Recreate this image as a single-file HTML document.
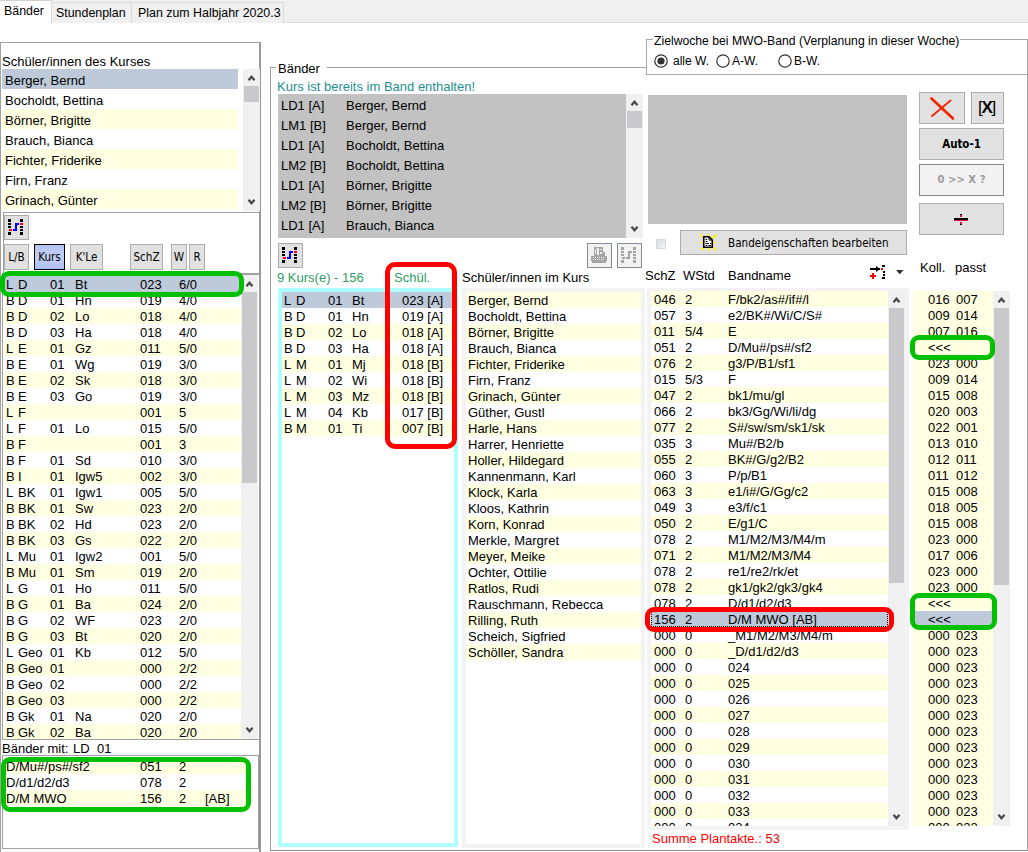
<!DOCTYPE html>
<html lang="de"><head><meta charset="utf-8"><title>Bänder</title>
<style>
*{box-sizing:border-box;margin:0;padding:0}
html,body{width:1028px;height:852px;overflow:hidden;background:#fff}
body{position:relative;font-family:"Liberation Sans",Arial,sans-serif;font-size:13px;color:#000;line-height:16px}
.a{position:absolute}
.t{position:absolute;white-space:pre;height:16px;line-height:16px}
.r{position:absolute;left:0;right:0;height:16px;line-height:17px;white-space:pre;overflow:hidden}
.r20{position:absolute;left:0;right:0;height:20px;line-height:23px}
.y{background:#FFFFE1}.s{background:#BECADA}
.c{position:absolute;top:0;white-space:pre}
.btn{position:absolute;background:#E1E1E1;border:1px solid #ADADAD;font-family:"Liberation Sans",sans-serif;font-size:11.6px;text-align:center}
.sb{position:absolute;background:#F0F0F0;width:17px}
.th{position:absolute;left:1px;width:15px;background:#C9C9CC}
.g{color:#2E9E62}
</style></head><body>

<div class="a" style="left:0;top:0;width:1028px;height:23px;background:#F0F0F0;border-bottom:1px solid #DCDCDC"></div>
<div class="a" style="left:51px;top:2px;width:81px;height:21px;background:#F0F0F0;border:1px solid #D9D9D9;border-bottom:none"></div>
<div class="a" style="left:131px;top:2px;width:153px;height:21px;background:#F0F0F0;border:1px solid #D9D9D9;border-bottom:none"></div>
<div class="a" style="left:0;top:0;width:52px;height:24px;background:#fff;border-top:1px solid #D0D0D0;border-right:1px solid #D9D9D9"></div>
<div class="t" style="left:4px;top:3px;font-size:12.4px">Bänder</div>
<div class="t" style="left:56px;top:5px;font-size:12.4px">Stundenplan</div>
<div class="t" style="left:138px;top:5px;font-size:12.4px">Plan zum Halbjahr 2020.3</div>
<div class="a" style="left:0;top:42px;width:261px;height:812px;border:1px solid #A0A0A0;border-right:2px solid #999;border-bottom:none"></div>
<div class="t" style="left:2px;top:54px">Schüler/innen des Kurses</div>
<div class="a" style="left:2px;top:69px;width:236px;height:141px;overflow:hidden">
<div class="r20 s" style="top:0px;padding-left:3px">Berger, Bernd</div>
<div class="r20 " style="top:20px;padding-left:3px">Bocholdt, Bettina</div>
<div class="r20 y" style="top:40px;padding-left:3px">Börner, Brigitte</div>
<div class="r20 " style="top:60px;padding-left:3px">Brauch, Bianca</div>
<div class="r20 y" style="top:80px;padding-left:3px">Fichter, Friderike</div>
<div class="r20 " style="top:100px;padding-left:3px">Firn, Franz</div>
<div class="r20 y" style="top:120px;padding-left:3px">Grinach, Günter</div>
</div>
<div class="sb" style="left:243px;top:69px;height:142px"><div class="th" style="top:17px;height:16px"></div><svg class="a" style="left:0;top:0" width="17" height="17"><path d="M5.5 11.3 L8.5 7.7 L11.5 11.3" fill="none" stroke="#484848" stroke-width="2.2"/></svg><svg class="a" style="left:0;bottom:0" width="17" height="17"><path d="M5.5 5.7 L8.5 9.3 L11.5 5.7" fill="none" stroke="#484848" stroke-width="2.2"/></svg></div>
<div class="a" style="left:3px;top:212px;width:256px;height:61px;border-top:1px solid #A0A0A0;border-left:1px solid #A0A0A0"></div>
<div class="btn" style="left:4px;top:215px;width:25px;height:25px"></div>
<svg class="a" style="left:8px;top:219px" width="15" height="16" viewBox="0 0 15 16" shape-rendering="crispEdges">
<g fill="#000"><rect x="0" y="0" width="3" height="3"/><rect x="0" y="4" width="3" height="2"/><rect x="0" y="7" width="3" height="2"/><rect x="0" y="13" width="3" height="3"/>
<rect x="12" y="0" width="3" height="3"/><rect x="12" y="7" width="3" height="2"/><rect x="12" y="10" width="3" height="2"/><rect x="12" y="13" width="3" height="3"/></g>
<g fill="#F00"><rect x="1" y="10" width="3" height="2"/><rect x="12" y="4" width="3" height="2"/></g>
<g fill="#00F"><rect x="7" y="4" width="4" height="2"/><rect x="7" y="4" width="2" height="8"/><rect x="5" y="10" width="4" height="2"/></g></svg>
<div class="btn" style="left:4px;top:244px;width:25px;height:26px;line-height:24px;font-family:&quot;DejaVu Sans Condensed&quot;,&quot;DejaVu Sans&quot;,sans-serif;font-size:11.6px;">L/B</div>
<div class="btn" style="left:34px;top:244px;width:31px;height:26px;line-height:24px;font-family:&quot;DejaVu Sans Condensed&quot;,&quot;DejaVu Sans&quot;,sans-serif;font-size:11.6px;background:linear-gradient(#B4C2F2,#C6D0F6 50%,#AEBCF0);border-color:#000;">Kurs</div>
<div class="btn" style="left:70px;top:244px;width:33px;height:26px;line-height:24px;font-family:&quot;DejaVu Sans Condensed&quot;,&quot;DejaVu Sans&quot;,sans-serif;font-size:11.6px;">K'Le</div>
<div class="btn" style="left:130px;top:244px;width:33px;height:26px;line-height:24px;font-family:&quot;DejaVu Sans Condensed&quot;,&quot;DejaVu Sans&quot;,sans-serif;font-size:11.6px;">SchZ</div>
<div class="btn" style="left:171px;top:244px;width:16px;height:26px;line-height:24px;font-family:&quot;DejaVu Sans Condensed&quot;,&quot;DejaVu Sans&quot;,sans-serif;font-size:11.6px;">W</div>
<div class="btn" style="left:189px;top:244px;width:16px;height:26px;line-height:24px;font-family:&quot;DejaVu Sans Condensed&quot;,&quot;DejaVu Sans&quot;,sans-serif;font-size:11.6px;">R</div>
<div class="a" style="left:2px;top:273px;width:258px;height:467px;border:1px solid #A0A0A0;border-top:2px solid #A0A0A0"></div>
<div class="a" style="left:4px;top:276px;width:237px;height:463px;overflow:hidden">
<div class="r s" style="top:0px"><span class="c" style="left:2px">L</span><span class="c" style="left:14px">D</span><span class="c" style="left:46px">01</span><span class="c" style="left:71px">Bt</span><span class="c" style="left:136px">023</span><span class="c" style="left:175px">6/0</span></div>
<div class="r " style="top:16px"><span class="c" style="left:2px">B</span><span class="c" style="left:14px">D</span><span class="c" style="left:46px">01</span><span class="c" style="left:71px">Hn</span><span class="c" style="left:136px">019</span><span class="c" style="left:175px">4/0</span></div>
<div class="r y" style="top:32px"><span class="c" style="left:2px">B</span><span class="c" style="left:14px">D</span><span class="c" style="left:46px">02</span><span class="c" style="left:71px">Lo</span><span class="c" style="left:136px">018</span><span class="c" style="left:175px">4/0</span></div>
<div class="r " style="top:48px"><span class="c" style="left:2px">B</span><span class="c" style="left:14px">D</span><span class="c" style="left:46px">03</span><span class="c" style="left:71px">Ha</span><span class="c" style="left:136px">018</span><span class="c" style="left:175px">4/0</span></div>
<div class="r y" style="top:64px"><span class="c" style="left:2px">L</span><span class="c" style="left:14px">E</span><span class="c" style="left:46px">01</span><span class="c" style="left:71px">Gz</span><span class="c" style="left:136px">011</span><span class="c" style="left:175px">5/0</span></div>
<div class="r " style="top:80px"><span class="c" style="left:2px">B</span><span class="c" style="left:14px">E</span><span class="c" style="left:46px">01</span><span class="c" style="left:71px">Wg</span><span class="c" style="left:136px">019</span><span class="c" style="left:175px">3/0</span></div>
<div class="r y" style="top:96px"><span class="c" style="left:2px">B</span><span class="c" style="left:14px">E</span><span class="c" style="left:46px">02</span><span class="c" style="left:71px">Sk</span><span class="c" style="left:136px">018</span><span class="c" style="left:175px">3/0</span></div>
<div class="r " style="top:112px"><span class="c" style="left:2px">B</span><span class="c" style="left:14px">E</span><span class="c" style="left:46px">03</span><span class="c" style="left:71px">Go</span><span class="c" style="left:136px">019</span><span class="c" style="left:175px">3/0</span></div>
<div class="r y" style="top:128px"><span class="c" style="left:2px">L</span><span class="c" style="left:14px">F</span><span class="c" style="left:46px"></span><span class="c" style="left:71px"></span><span class="c" style="left:136px">001</span><span class="c" style="left:175px">5</span></div>
<div class="r " style="top:144px"><span class="c" style="left:2px">L</span><span class="c" style="left:14px">F</span><span class="c" style="left:46px">01</span><span class="c" style="left:71px">Lo</span><span class="c" style="left:136px">015</span><span class="c" style="left:175px">5/0</span></div>
<div class="r y" style="top:160px"><span class="c" style="left:2px">B</span><span class="c" style="left:14px">F</span><span class="c" style="left:46px"></span><span class="c" style="left:71px"></span><span class="c" style="left:136px">001</span><span class="c" style="left:175px">3</span></div>
<div class="r " style="top:176px"><span class="c" style="left:2px">B</span><span class="c" style="left:14px">F</span><span class="c" style="left:46px">01</span><span class="c" style="left:71px">Sd</span><span class="c" style="left:136px">010</span><span class="c" style="left:175px">3/0</span></div>
<div class="r y" style="top:192px"><span class="c" style="left:2px">B</span><span class="c" style="left:14px">I</span><span class="c" style="left:46px">01</span><span class="c" style="left:71px">Igw5</span><span class="c" style="left:136px">002</span><span class="c" style="left:175px">3/0</span></div>
<div class="r " style="top:208px"><span class="c" style="left:2px">L</span><span class="c" style="left:14px">BK</span><span class="c" style="left:46px">01</span><span class="c" style="left:71px">Igw1</span><span class="c" style="left:136px">005</span><span class="c" style="left:175px">5/0</span></div>
<div class="r y" style="top:224px"><span class="c" style="left:2px">B</span><span class="c" style="left:14px">BK</span><span class="c" style="left:46px">01</span><span class="c" style="left:71px">Sw</span><span class="c" style="left:136px">023</span><span class="c" style="left:175px">2/0</span></div>
<div class="r " style="top:240px"><span class="c" style="left:2px">B</span><span class="c" style="left:14px">BK</span><span class="c" style="left:46px">02</span><span class="c" style="left:71px">Hd</span><span class="c" style="left:136px">023</span><span class="c" style="left:175px">2/0</span></div>
<div class="r y" style="top:256px"><span class="c" style="left:2px">B</span><span class="c" style="left:14px">BK</span><span class="c" style="left:46px">03</span><span class="c" style="left:71px">Gs</span><span class="c" style="left:136px">022</span><span class="c" style="left:175px">2/0</span></div>
<div class="r " style="top:272px"><span class="c" style="left:2px">L</span><span class="c" style="left:14px">Mu</span><span class="c" style="left:46px">01</span><span class="c" style="left:71px">Igw2</span><span class="c" style="left:136px">001</span><span class="c" style="left:175px">5/0</span></div>
<div class="r y" style="top:288px"><span class="c" style="left:2px">B</span><span class="c" style="left:14px">Mu</span><span class="c" style="left:46px">01</span><span class="c" style="left:71px">Sm</span><span class="c" style="left:136px">019</span><span class="c" style="left:175px">2/0</span></div>
<div class="r " style="top:304px"><span class="c" style="left:2px">L</span><span class="c" style="left:14px">G</span><span class="c" style="left:46px">01</span><span class="c" style="left:71px">Ho</span><span class="c" style="left:136px">011</span><span class="c" style="left:175px">5/0</span></div>
<div class="r y" style="top:320px"><span class="c" style="left:2px">B</span><span class="c" style="left:14px">G</span><span class="c" style="left:46px">01</span><span class="c" style="left:71px">Ba</span><span class="c" style="left:136px">024</span><span class="c" style="left:175px">2/0</span></div>
<div class="r " style="top:336px"><span class="c" style="left:2px">B</span><span class="c" style="left:14px">G</span><span class="c" style="left:46px">02</span><span class="c" style="left:71px">WF</span><span class="c" style="left:136px">023</span><span class="c" style="left:175px">2/0</span></div>
<div class="r y" style="top:352px"><span class="c" style="left:2px">B</span><span class="c" style="left:14px">G</span><span class="c" style="left:46px">03</span><span class="c" style="left:71px">Bt</span><span class="c" style="left:136px">020</span><span class="c" style="left:175px">2/0</span></div>
<div class="r " style="top:368px"><span class="c" style="left:2px">L</span><span class="c" style="left:14px">Geo</span><span class="c" style="left:46px">01</span><span class="c" style="left:71px">Kb</span><span class="c" style="left:136px">012</span><span class="c" style="left:175px">5/0</span></div>
<div class="r y" style="top:384px"><span class="c" style="left:2px">B</span><span class="c" style="left:14px">Geo</span><span class="c" style="left:46px">01</span><span class="c" style="left:71px"></span><span class="c" style="left:136px">000</span><span class="c" style="left:175px">2/2</span></div>
<div class="r " style="top:400px"><span class="c" style="left:2px">B</span><span class="c" style="left:14px">Geo</span><span class="c" style="left:46px">02</span><span class="c" style="left:71px"></span><span class="c" style="left:136px">000</span><span class="c" style="left:175px">2/2</span></div>
<div class="r y" style="top:416px"><span class="c" style="left:2px">B</span><span class="c" style="left:14px">Geo</span><span class="c" style="left:46px">03</span><span class="c" style="left:71px"></span><span class="c" style="left:136px">000</span><span class="c" style="left:175px">2/2</span></div>
<div class="r " style="top:432px"><span class="c" style="left:2px">B</span><span class="c" style="left:14px">Gk</span><span class="c" style="left:46px">01</span><span class="c" style="left:71px">Na</span><span class="c" style="left:136px">020</span><span class="c" style="left:175px">2/0</span></div>
<div class="r y" style="top:448px"><span class="c" style="left:2px">B</span><span class="c" style="left:14px">Gk</span><span class="c" style="left:46px">02</span><span class="c" style="left:71px">Ba</span><span class="c" style="left:136px">020</span><span class="c" style="left:175px">2/0</span></div>
</div>
<div class="sb" style="left:241px;top:275px;height:464px"><div class="th" style="top:17px;height:191px"></div><svg class="a" style="left:0;top:0" width="17" height="17"><path d="M5.5 11.3 L8.5 7.7 L11.5 11.3" fill="none" stroke="#484848" stroke-width="2.2"/></svg><svg class="a" style="left:0;bottom:0" width="17" height="17"><path d="M5.5 5.7 L8.5 9.3 L11.5 5.7" fill="none" stroke="#484848" stroke-width="2.2"/></svg></div>
<div class="a" style="left:0;top:271px;width:244px;height:26px;border:5px solid #00C000;border-radius:9px"></div>
<div class="t" style="left:2px;top:741px">Bänder mit:</div><div class="t" style="left:73px;top:741px">LD</div><div class="t" style="left:97px;top:741px">01</div>
<div class="a" style="left:2px;top:755px;width:257px;height:94px;border:1px solid #A0A0A0"></div>
<div class="a" style="left:4px;top:758px;width:243px;height:48px;overflow:hidden">
<div class="r y" style="top:0px"><span class="c" style="left:2px">D/Mu#/ps#/sf2</span><span class="c" style="left:136px">051</span><span class="c" style="left:175px">2</span><span class="c" style="left:201px"></span></div>
<div class="r " style="top:16px"><span class="c" style="left:2px">D/d1/d2/d3</span><span class="c" style="left:136px">078</span><span class="c" style="left:175px">2</span><span class="c" style="left:201px"></span></div>
<div class="r y" style="top:32px"><span class="c" style="left:2px">D/M MWO</span><span class="c" style="left:136px">156</span><span class="c" style="left:175px">2</span><span class="c" style="left:201px">[AB]</span></div>
</div>
<div class="a" style="left:1px;top:757px;width:250px;height:55px;border:5px solid #00C000;border-radius:9px"></div>
<div class="a" style="left:270px;top:67px;width:758px;height:784px;border:1px solid #A0A0A0;border-bottom-color:#8C8C8C"></div>
<div class="t" style="left:276px;top:61px;width:51px;background:#fff;padding:0 2px;font-size:13px">Bänder</div>
<div class="t" style="left:277px;top:79px;color:#1E9090">Kurs ist bereits im Band enthalten!</div>
<div class="a" style="left:278px;top:94px;width:348px;height:144px;background:#C2C2C2;overflow:hidden">
<div class="r20" style="top:0px"><span class="c" style="left:3px">LD1 [A]</span><span class="c" style="left:68px">Berger, Bernd</span></div>
<div class="r20" style="top:20px"><span class="c" style="left:3px">LM1 [B]</span><span class="c" style="left:68px">Berger, Bernd</span></div>
<div class="r20" style="top:40px"><span class="c" style="left:3px">LD1 [A]</span><span class="c" style="left:68px">Bocholdt, Bettina</span></div>
<div class="r20" style="top:60px"><span class="c" style="left:3px">LM2 [B]</span><span class="c" style="left:68px">Bocholdt, Bettina</span></div>
<div class="r20" style="top:80px"><span class="c" style="left:3px">LD1 [A]</span><span class="c" style="left:68px">Börner, Brigitte</span></div>
<div class="r20" style="top:100px"><span class="c" style="left:3px">LM2 [B]</span><span class="c" style="left:68px">Börner, Brigitte</span></div>
<div class="r20" style="top:120px"><span class="c" style="left:3px">LD1 [A]</span><span class="c" style="left:68px">Brauch, Bianca</span></div>
</div>
<div class="sb" style="left:626px;top:94px;height:144px"><div class="th" style="top:17px;height:17px"></div><svg class="a" style="left:0;top:0" width="17" height="17"><path d="M5.5 11.3 L8.5 7.7 L11.5 11.3" fill="none" stroke="#484848" stroke-width="2.2"/></svg><svg class="a" style="left:0;bottom:0" width="17" height="17"><path d="M5.5 5.7 L8.5 9.3 L11.5 5.7" fill="none" stroke="#484848" stroke-width="2.2"/></svg></div>
<div class="a" style="left:648px;top:95px;width:259px;height:129px;background:#C2C2C2"></div>
<div class="a" style="left:646px;top:39px;width:382px;height:36px;background:#fff;border:1px solid #A8A8A8"></div>
<div class="t" style="left:653px;top:33px;background:#fff;padding:0 1px;font-size:12.2px">Zielwoche bei MWO-Band (Verplanung in dieser Woche)</div>
<svg class="a" style="left:653.5px;top:53.5px" width="14" height="14"><circle cx="7" cy="7" r="6.2" fill="#fff" stroke="#333" stroke-width="1.2"/><circle cx="7" cy="7" r="3.6" fill="#333"/></svg>
<svg class="a" style="left:715.5px;top:53.5px" width="14" height="14"><circle cx="7" cy="7" r="6.2" fill="#fff" stroke="#333" stroke-width="1.2"/></svg>
<svg class="a" style="left:777.5px;top:53.5px" width="14" height="14"><circle cx="7" cy="7" r="6.2" fill="#fff" stroke="#333" stroke-width="1.2"/></svg>
<div class="t" style="left:673px;top:53px;font-size:12px">alle W.</div>
<div class="t" style="left:732px;top:53px;font-size:12px">A-W.</div>
<div class="t" style="left:794px;top:53px;font-size:12px">B-W.</div>
<div class="btn" style="left:919px;top:92px;width:46px;height:32px"></div>
<svg class="a" style="left:930px;top:96px" width="24" height="24"><path d="M1.5 2.5 L23 22.5" stroke="#F02808" stroke-width="2.8" stroke-linecap="round" fill="none"/><path d="M20.5 4.5 L2 20" stroke="#F02808" stroke-width="1.9" stroke-linecap="round" fill="none"/></svg>
<div class="btn" style="left:971px;top:92px;width:33px;height:32px"></div>
<div class="t" style="left:970px;top:100px;width:33px;text-align:center;font-size:17px;letter-spacing:-1.2px;line-height:16px">[<b style="font-size:17px;font-weight:600">X</b>]</div>
<div class="btn" style="left:919px;top:128px;width:85px;height:32px;line-height:30px;font-weight:bold;font-family:&quot;DejaVu Sans Condensed&quot;,&quot;DejaVu Sans&quot;,sans-serif;font-size:11.4px">Auto-1</div>
<div class="btn" style="left:919px;top:164px;width:85px;height:32px;line-height:30px;font-weight:bold;font-family:&quot;DejaVu Sans Condensed&quot;,&quot;DejaVu Sans&quot;,sans-serif;font-size:11.6px;color:#9C9C9C;background:#F2F2F2;border:1px solid #868A92;font-size:11.2px">0 &gt;&gt; X ?</div>
<div class="btn" style="left:919px;top:203px;width:85px;height:32px"></div>
<svg class="a" style="left:952px;top:212px" width="18" height="16" shape-rendering="crispEdges"><rect x="2" y="6" width="14" height="1.5" fill="#000"/><rect x="2" y="7.5" width="14" height="1.5" fill="#E0104C"/><rect x="8" y="2" width="2" height="1" fill="#000"/><rect x="8" y="3" width="2" height="2" fill="#E0104C"/><rect x="8" y="10" width="2" height="2" fill="#E0104C"/><rect x="8" y="12" width="2" height="1" fill="#000"/></svg>
<div class="a" style="left:656px;top:239px;width:10px;height:10px;border:1px solid #D8D8D8;background:linear-gradient(135deg,#D8DCE0,#F4F4F4)"></div>
<div class="btn" style="left:680px;top:230px;width:227px;height:25px;line-height:25px;text-align:left;padding-left:47px;font-family:&quot;DejaVu Sans Condensed&quot;,&quot;DejaVu Sans&quot;,sans-serif;font-size:11.6px">Bandeigenschaften bearbeiten</div>
<svg class="a" style="left:699px;top:233px" width="19" height="19" viewBox="0 0 19 19"><g stroke="#FFF200" stroke-width="1.7"><path d="M1 1.5 L5 5 M17.5 1.5 L13 5.5 M2 17 L5.5 14 M17.5 17.5 L14 14 M9 1 V4 M10 15 V18 M1 9.5 H4 M14 9.5 H17.5"/></g><path d="M4.75 3.75 H10 L13.25 7 V14.25 H4.75 Z" fill="#fff" stroke="#000" stroke-width="1.6"/><path d="M10 4 V7 H13" fill="none" stroke="#000" stroke-width="1"/><path d="M6.5 6.5 H8 M6.5 8.5 H8.5 M6.5 10.5 H10 M11 10.5 H12 M6.5 12.5 H8.5 M9.5 12.5 H12" stroke="#000" stroke-width="1.1"/></svg>
<div class="btn" style="left:278px;top:243px;width:25px;height:25px"></div>
<svg class="a" style="left:282px;top:247px" width="15" height="16" viewBox="0 0 15 16" shape-rendering="crispEdges">
<g fill="#000"><rect x="0" y="0" width="3" height="3"/><rect x="0" y="4" width="3" height="2"/><rect x="0" y="7" width="3" height="2"/><rect x="0" y="13" width="3" height="3"/>
<rect x="12" y="0" width="3" height="3"/><rect x="12" y="7" width="3" height="2"/><rect x="12" y="10" width="3" height="2"/><rect x="12" y="13" width="3" height="3"/></g>
<g fill="#F00"><rect x="1" y="10" width="3" height="2"/><rect x="12" y="4" width="3" height="2"/></g>
<g fill="#00F"><rect x="7" y="4" width="4" height="2"/><rect x="7" y="4" width="2" height="8"/><rect x="5" y="10" width="4" height="2"/></g></svg>
<div class="btn" style="left:587px;top:243px;width:25px;height:25px;background:#F2F2F2;border-color:#868A92"></div>
<svg class="a" style="left:591px;top:247px" width="17" height="17" shape-rendering="crispEdges"><g fill="#A4A4A4"><rect x="3" y="0" width="9" height="9"/><rect x="12" y="5" width="2" height="4"/><rect x="0" y="9" width="16" height="5"/><rect x="1" y="14" width="14" height="2"/></g><g fill="#F2F2F2"><rect x="6" y="1" width="2" height="7"/><rect x="4" y="2" width="1" height="5"/><rect x="9" y="2" width="2" height="1"/><rect x="9" y="5" width="2" height="2"/><rect x="2" y="10" width="1" height="1"/><rect x="4" y="10" width="1" height="1"/><rect x="6" y="10" width="1" height="1"/><rect x="8" y="10" width="1" height="1"/><rect x="10" y="10" width="1" height="1"/><rect x="12" y="10" width="1" height="1"/><rect x="2" y="12" width="1" height="1"/><rect x="4" y="12" width="1" height="1"/><rect x="6" y="12" width="1" height="1"/><rect x="8" y="12" width="1" height="1"/><rect x="10" y="12" width="1" height="1"/><rect x="12" y="12" width="1" height="1"/></g></svg>
<div class="btn" style="left:617px;top:243px;width:25px;height:25px;background:#F2F2F2;border-color:#868A92"></div>
<svg class="a" style="left:621px;top:247px" width="15" height="16" viewBox="0 0 15 16" shape-rendering="crispEdges">
<g fill="#A4A4A4"><rect x="0" y="0" width="3" height="3"/><rect x="0" y="4" width="3" height="2"/><rect x="0" y="7" width="3" height="2"/><rect x="0" y="13" width="3" height="3"/>
<rect x="12" y="0" width="3" height="3"/><rect x="12" y="7" width="3" height="2"/><rect x="12" y="10" width="3" height="2"/><rect x="12" y="13" width="3" height="3"/></g>
<g fill="#A4A4A4"><rect x="1" y="10" width="3" height="2"/><rect x="12" y="4" width="3" height="2"/></g>
<g fill="#A4A4A4"><rect x="7" y="4" width="4" height="2"/><rect x="7" y="4" width="2" height="8"/><rect x="5" y="10" width="4" height="2"/></g></svg>
<div class="t g" style="left:277px;top:270px">9 Kurs(e) - 156</div>
<div class="t g" style="left:394px;top:270px">Schül.</div>
<div class="t" style="left:462px;top:270px">Schüler/innen im Kurs</div>
<div class="t" style="left:645px;top:268px">SchZ</div>
<div class="t" style="left:683px;top:268px">WStd</div>
<div class="t" style="left:728px;top:268px">Bandname</div>
<div class="t" style="left:920px;top:260px">Koll.</div>
<div class="t" style="left:955px;top:260px">passt</div>
<svg class="a" style="left:869px;top:263px" width="40" height="18" shape-rendering="crispEdges"><rect x="1" y="5" width="10" height="2" fill="#000"/><path d="M7 3 L11 6 L7 9 Z" fill="#000" shape-rendering="auto"/><rect x="3" y="10" width="2" height="6" fill="#F00"/><rect x="1" y="12" width="6" height="2" fill="#F00"/><rect x="12" y="5" width="2" height="2" fill="#F00"/><g fill="#000"><rect x="13" y="2" width="3" height="2"/><rect x="14" y="8" width="2" height="2"/><rect x="14" y="11" width="2" height="2"/><rect x="13" y="14" width="3" height="2"/></g><path d="M27 7 L34.5 7 L30.75 11.2 Z" fill="#303030" shape-rendering="auto"/></svg>
<div class="a" style="left:278px;top:288px;width:180px;height:559px;border:4px solid #B0FFFF;background:#fff"></div>
<div class="a" style="left:282px;top:292px;width:172px;height:144px;overflow:hidden">
<div class="r s" style="top:0px"><span class="c" style="left:2px">L</span><span class="c" style="left:14px">D</span><span class="c" style="left:46px">01</span><span class="c" style="left:70px">Bt</span><span class="c" style="left:120px">023 [A]</span></div>
<div class="r " style="top:16px"><span class="c" style="left:2px">B</span><span class="c" style="left:14px">D</span><span class="c" style="left:46px">01</span><span class="c" style="left:70px">Hn</span><span class="c" style="left:120px">019 [A]</span></div>
<div class="r y" style="top:32px"><span class="c" style="left:2px">B</span><span class="c" style="left:14px">D</span><span class="c" style="left:46px">02</span><span class="c" style="left:70px">Lo</span><span class="c" style="left:120px">018 [A]</span></div>
<div class="r " style="top:48px"><span class="c" style="left:2px">B</span><span class="c" style="left:14px">D</span><span class="c" style="left:46px">03</span><span class="c" style="left:70px">Ha</span><span class="c" style="left:120px">018 [A]</span></div>
<div class="r y" style="top:64px"><span class="c" style="left:2px">L</span><span class="c" style="left:14px">M</span><span class="c" style="left:46px">01</span><span class="c" style="left:70px">Mj</span><span class="c" style="left:120px">018 [B]</span></div>
<div class="r " style="top:80px"><span class="c" style="left:2px">L</span><span class="c" style="left:14px">M</span><span class="c" style="left:46px">02</span><span class="c" style="left:70px">Wi</span><span class="c" style="left:120px">018 [B]</span></div>
<div class="r y" style="top:96px"><span class="c" style="left:2px">L</span><span class="c" style="left:14px">M</span><span class="c" style="left:46px">03</span><span class="c" style="left:70px">Mz</span><span class="c" style="left:120px">018 [B]</span></div>
<div class="r " style="top:112px"><span class="c" style="left:2px">L</span><span class="c" style="left:14px">M</span><span class="c" style="left:46px">04</span><span class="c" style="left:70px">Kb</span><span class="c" style="left:120px">017 [B]</span></div>
<div class="r y" style="top:128px"><span class="c" style="left:2px">B</span><span class="c" style="left:14px">M</span><span class="c" style="left:46px">01</span><span class="c" style="left:70px">Ti</span><span class="c" style="left:120px">007 [B]</span></div>
</div>
<div class="a" style="left:385px;top:262px;width:72px;height:187px;border:5px solid #FF0000;border-radius:10px"></div>
<div class="a" style="left:462px;top:288px;width:183px;height:560px;border:4px solid #F3F3F3;background:#fff"></div>
<div class="a" style="left:466px;top:292px;width:175px;height:400px;overflow:hidden">
<div class="r y" style="top:0px;padding-left:2px">Berger, Bernd</div>
<div class="r " style="top:16px;padding-left:2px">Bocholdt, Bettina</div>
<div class="r y" style="top:32px;padding-left:2px">Börner, Brigitte</div>
<div class="r " style="top:48px;padding-left:2px">Brauch, Bianca</div>
<div class="r y" style="top:64px;padding-left:2px">Fichter, Friderike</div>
<div class="r " style="top:80px;padding-left:2px">Firn, Franz</div>
<div class="r y" style="top:96px;padding-left:2px">Grinach, Günter</div>
<div class="r " style="top:112px;padding-left:2px">Güther, Gustl</div>
<div class="r y" style="top:128px;padding-left:2px">Harle, Hans</div>
<div class="r " style="top:144px;padding-left:2px">Harrer, Henriette</div>
<div class="r y" style="top:160px;padding-left:2px">Holler, Hildegard</div>
<div class="r " style="top:176px;padding-left:2px">Kannenmann, Karl</div>
<div class="r y" style="top:192px;padding-left:2px">Klock, Karla</div>
<div class="r " style="top:208px;padding-left:2px">Kloos, Kathrin</div>
<div class="r y" style="top:224px;padding-left:2px">Korn, Konrad</div>
<div class="r " style="top:240px;padding-left:2px">Merkle, Margret</div>
<div class="r y" style="top:256px;padding-left:2px">Meyer, Meike</div>
<div class="r " style="top:272px;padding-left:2px">Ochter, Ottilie</div>
<div class="r y" style="top:288px;padding-left:2px">Ratlos, Rudi</div>
<div class="r " style="top:304px;padding-left:2px">Rauschmann, Rebecca</div>
<div class="r y" style="top:320px;padding-left:2px">Rilling, Ruth</div>
<div class="r " style="top:336px;padding-left:2px">Scheich, Sigfried</div>
<div class="r y" style="top:352px;padding-left:2px">Schöller, Sandra</div>
</div>
<div class="a" style="left:647px;top:288px;width:262px;height:542px;border:4px solid #F3F3F3;border-top-width:3px;background:#fff"></div>
<div class="a" style="left:651px;top:291px;width:237px;height:535px;overflow:hidden">
<div class="r y" style="top:0px"><span class="c" style="left:3px">046</span><span class="c" style="left:34px">2</span><span class="c" style="left:77px">F/bk2/as#/if#/l</span></div>
<div class="r " style="top:16px"><span class="c" style="left:3px">057</span><span class="c" style="left:34px">3</span><span class="c" style="left:77px">e2/BK#/Wi/C/S#</span></div>
<div class="r y" style="top:32px"><span class="c" style="left:3px">011</span><span class="c" style="left:34px">5/4</span><span class="c" style="left:77px">E</span></div>
<div class="r " style="top:48px"><span class="c" style="left:3px">051</span><span class="c" style="left:34px">2</span><span class="c" style="left:77px">D/Mu#/ps#/sf2</span></div>
<div class="r y" style="top:64px"><span class="c" style="left:3px">076</span><span class="c" style="left:34px">2</span><span class="c" style="left:77px">g3/P/B1/sf1</span></div>
<div class="r " style="top:80px"><span class="c" style="left:3px">015</span><span class="c" style="left:34px">5/3</span><span class="c" style="left:77px">F</span></div>
<div class="r y" style="top:96px"><span class="c" style="left:3px">047</span><span class="c" style="left:34px">2</span><span class="c" style="left:77px">bk1/mu/gl</span></div>
<div class="r " style="top:112px"><span class="c" style="left:3px">066</span><span class="c" style="left:34px">2</span><span class="c" style="left:77px">bk3/Gg/Wi/li/dg</span></div>
<div class="r y" style="top:128px"><span class="c" style="left:3px">077</span><span class="c" style="left:34px">2</span><span class="c" style="left:77px">S#/sw/sm/sk1/sk</span></div>
<div class="r " style="top:144px"><span class="c" style="left:3px">035</span><span class="c" style="left:34px">3</span><span class="c" style="left:77px">Mu#/B2/b</span></div>
<div class="r y" style="top:160px"><span class="c" style="left:3px">055</span><span class="c" style="left:34px">2</span><span class="c" style="left:77px">BK#/G/g2/B2</span></div>
<div class="r " style="top:176px"><span class="c" style="left:3px">060</span><span class="c" style="left:34px">3</span><span class="c" style="left:77px">P/p/B1</span></div>
<div class="r y" style="top:192px"><span class="c" style="left:3px">063</span><span class="c" style="left:34px">3</span><span class="c" style="left:77px">e1/i#/G/Gg/c2</span></div>
<div class="r " style="top:208px"><span class="c" style="left:3px">049</span><span class="c" style="left:34px">3</span><span class="c" style="left:77px">e3/f/c1</span></div>
<div class="r y" style="top:224px"><span class="c" style="left:3px">050</span><span class="c" style="left:34px">2</span><span class="c" style="left:77px">E/g1/C</span></div>
<div class="r " style="top:240px"><span class="c" style="left:3px">078</span><span class="c" style="left:34px">2</span><span class="c" style="left:77px">M1/M2/M3/M4/m</span></div>
<div class="r y" style="top:256px"><span class="c" style="left:3px">071</span><span class="c" style="left:34px">2</span><span class="c" style="left:77px">M1/M2/M3/M4</span></div>
<div class="r " style="top:272px"><span class="c" style="left:3px">078</span><span class="c" style="left:34px">2</span><span class="c" style="left:77px">re1/re2/rk/et</span></div>
<div class="r y" style="top:288px"><span class="c" style="left:3px">078</span><span class="c" style="left:34px">2</span><span class="c" style="left:77px">gk1/gk2/gk3/gk4</span></div>
<div class="r " style="top:304px"><span class="c" style="left:3px">078</span><span class="c" style="left:34px">2</span><span class="c" style="left:77px">D/d1/d2/d3</span></div>
<div class="r s" style="top:320px;outline:1px dotted #000;outline-offset:-1px"><span class="c" style="left:3px">156</span><span class="c" style="left:34px">2</span><span class="c" style="left:77px">D/M MWO [AB]</span></div>
<div class="r " style="top:336px"><span class="c" style="left:3px">000</span><span class="c" style="left:34px">0</span><span class="c" style="left:77px">_M1/M2/M3/M4/m</span></div>
<div class="r y" style="top:352px"><span class="c" style="left:3px">000</span><span class="c" style="left:34px">0</span><span class="c" style="left:77px">_D/d1/d2/d3</span></div>
<div class="r " style="top:368px"><span class="c" style="left:3px">000</span><span class="c" style="left:34px">0</span><span class="c" style="left:77px">024</span></div>
<div class="r y" style="top:384px"><span class="c" style="left:3px">000</span><span class="c" style="left:34px">0</span><span class="c" style="left:77px">025</span></div>
<div class="r " style="top:400px"><span class="c" style="left:3px">000</span><span class="c" style="left:34px">0</span><span class="c" style="left:77px">026</span></div>
<div class="r y" style="top:416px"><span class="c" style="left:3px">000</span><span class="c" style="left:34px">0</span><span class="c" style="left:77px">027</span></div>
<div class="r " style="top:432px"><span class="c" style="left:3px">000</span><span class="c" style="left:34px">0</span><span class="c" style="left:77px">028</span></div>
<div class="r y" style="top:448px"><span class="c" style="left:3px">000</span><span class="c" style="left:34px">0</span><span class="c" style="left:77px">029</span></div>
<div class="r " style="top:464px"><span class="c" style="left:3px">000</span><span class="c" style="left:34px">0</span><span class="c" style="left:77px">030</span></div>
<div class="r y" style="top:480px"><span class="c" style="left:3px">000</span><span class="c" style="left:34px">0</span><span class="c" style="left:77px">031</span></div>
<div class="r " style="top:496px"><span class="c" style="left:3px">000</span><span class="c" style="left:34px">0</span><span class="c" style="left:77px">032</span></div>
<div class="r y" style="top:512px"><span class="c" style="left:3px">000</span><span class="c" style="left:34px">0</span><span class="c" style="left:77px">033</span></div>
<div class="r " style="top:528px"><span class="c" style="left:3px">000</span><span class="c" style="left:34px">0</span><span class="c" style="left:77px">034</span></div>
</div>
<div class="sb" style="left:888px;top:291px;height:535px"><div class="th" style="top:17px;height:275px"></div><svg class="a" style="left:0;top:0" width="17" height="17"><path d="M5.5 11.3 L8.5 7.7 L11.5 11.3" fill="none" stroke="#484848" stroke-width="2.2"/></svg><svg class="a" style="left:0;bottom:0" width="17" height="17"><path d="M5.5 5.7 L8.5 9.3 L11.5 5.7" fill="none" stroke="#484848" stroke-width="2.2"/></svg></div>
<div class="a" style="left:913px;top:291px;width:80px;height:535px;overflow:hidden;background:#FFFFE1">
<div class="r y" style="top:0px;"><span class="c" style="left:15px">016</span><span class="c" style="left:43px">007</span></div>
<div class="r y" style="top:16px;"><span class="c" style="left:15px">009</span><span class="c" style="left:43px">014</span></div>
<div class="r y" style="top:32px;"><span class="c" style="left:15px">007</span><span class="c" style="left:43px">016</span></div>
<div class="r y" style="top:48px;"><span class="c" style="left:15px">&lt;&lt;&lt;</span><span class="c" style="left:43px"></span></div>
<div class="r y" style="top:64px;"><span class="c" style="left:15px">023</span><span class="c" style="left:43px">000</span></div>
<div class="r y" style="top:80px;"><span class="c" style="left:15px">009</span><span class="c" style="left:43px">014</span></div>
<div class="r y" style="top:96px;"><span class="c" style="left:15px">015</span><span class="c" style="left:43px">008</span></div>
<div class="r y" style="top:112px;"><span class="c" style="left:15px">020</span><span class="c" style="left:43px">003</span></div>
<div class="r y" style="top:128px;"><span class="c" style="left:15px">022</span><span class="c" style="left:43px">001</span></div>
<div class="r y" style="top:144px;"><span class="c" style="left:15px">013</span><span class="c" style="left:43px">010</span></div>
<div class="r y" style="top:160px;"><span class="c" style="left:15px">012</span><span class="c" style="left:43px">011</span></div>
<div class="r y" style="top:176px;"><span class="c" style="left:15px">011</span><span class="c" style="left:43px">012</span></div>
<div class="r y" style="top:192px;"><span class="c" style="left:15px">015</span><span class="c" style="left:43px">008</span></div>
<div class="r y" style="top:208px;"><span class="c" style="left:15px">018</span><span class="c" style="left:43px">005</span></div>
<div class="r y" style="top:224px;"><span class="c" style="left:15px">015</span><span class="c" style="left:43px">008</span></div>
<div class="r y" style="top:240px;"><span class="c" style="left:15px">023</span><span class="c" style="left:43px">000</span></div>
<div class="r y" style="top:256px;"><span class="c" style="left:15px">017</span><span class="c" style="left:43px">006</span></div>
<div class="r y" style="top:272px;"><span class="c" style="left:15px">023</span><span class="c" style="left:43px">000</span></div>
<div class="r y" style="top:288px;"><span class="c" style="left:15px">023</span><span class="c" style="left:43px">000</span></div>
<div class="r y" style="top:304px;"><span class="c" style="left:15px">&lt;&lt;&lt;</span><span class="c" style="left:43px"></span></div>
<div class="r s" style="top:320px;"><span class="c" style="left:15px">&lt;&lt;&lt;</span><span class="c" style="left:43px"></span></div>
<div class="r y" style="top:336px;"><span class="c" style="left:15px">000</span><span class="c" style="left:43px">023</span></div>
<div class="r y" style="top:352px;"><span class="c" style="left:15px">000</span><span class="c" style="left:43px">023</span></div>
<div class="r y" style="top:368px;"><span class="c" style="left:15px">000</span><span class="c" style="left:43px">023</span></div>
<div class="r y" style="top:384px;"><span class="c" style="left:15px">000</span><span class="c" style="left:43px">023</span></div>
<div class="r y" style="top:400px;"><span class="c" style="left:15px">000</span><span class="c" style="left:43px">023</span></div>
<div class="r y" style="top:416px;"><span class="c" style="left:15px">000</span><span class="c" style="left:43px">023</span></div>
<div class="r y" style="top:432px;"><span class="c" style="left:15px">000</span><span class="c" style="left:43px">023</span></div>
<div class="r y" style="top:448px;"><span class="c" style="left:15px">000</span><span class="c" style="left:43px">023</span></div>
<div class="r y" style="top:464px;"><span class="c" style="left:15px">000</span><span class="c" style="left:43px">023</span></div>
<div class="r y" style="top:480px;"><span class="c" style="left:15px">000</span><span class="c" style="left:43px">023</span></div>
<div class="r y" style="top:496px;"><span class="c" style="left:15px">000</span><span class="c" style="left:43px">023</span></div>
<div class="r y" style="top:512px;"><span class="c" style="left:15px">000</span><span class="c" style="left:43px">023</span></div>
<div class="r y" style="top:528px;"><span class="c" style="left:15px">000</span><span class="c" style="left:43px">023</span></div>
<div class="r y" style="top:544px;"><span class="c" style="left:15px">000</span><span class="c" style="left:43px">023</span></div>
</div>
<div class="sb" style="left:993px;top:291px;height:535px"><div class="th" style="top:17px;height:277px"></div><svg class="a" style="left:0;top:0" width="17" height="17"><path d="M5.5 11.3 L8.5 7.7 L11.5 11.3" fill="none" stroke="#484848" stroke-width="2.2"/></svg><svg class="a" style="left:0;bottom:0" width="17" height="17"><path d="M5.5 5.7 L8.5 9.3 L11.5 5.7" fill="none" stroke="#484848" stroke-width="2.2"/></svg></div>
<div class="a" style="left:910px;top:335px;width:85px;height:25px;border:5px solid #00C000;border-radius:9px"></div>
<div class="a" style="left:910px;top:593px;width:87px;height:37px;border:5px solid #00C000;border-radius:9px"></div>
<div class="a" style="left:645px;top:607px;width:249px;height:25px;border:5px solid #FF0000;border-radius:9px"></div>
<div class="t" style="left:652px;top:831px;color:#FF0000">Summe Plantakte.: 53</div>
</body></html>
